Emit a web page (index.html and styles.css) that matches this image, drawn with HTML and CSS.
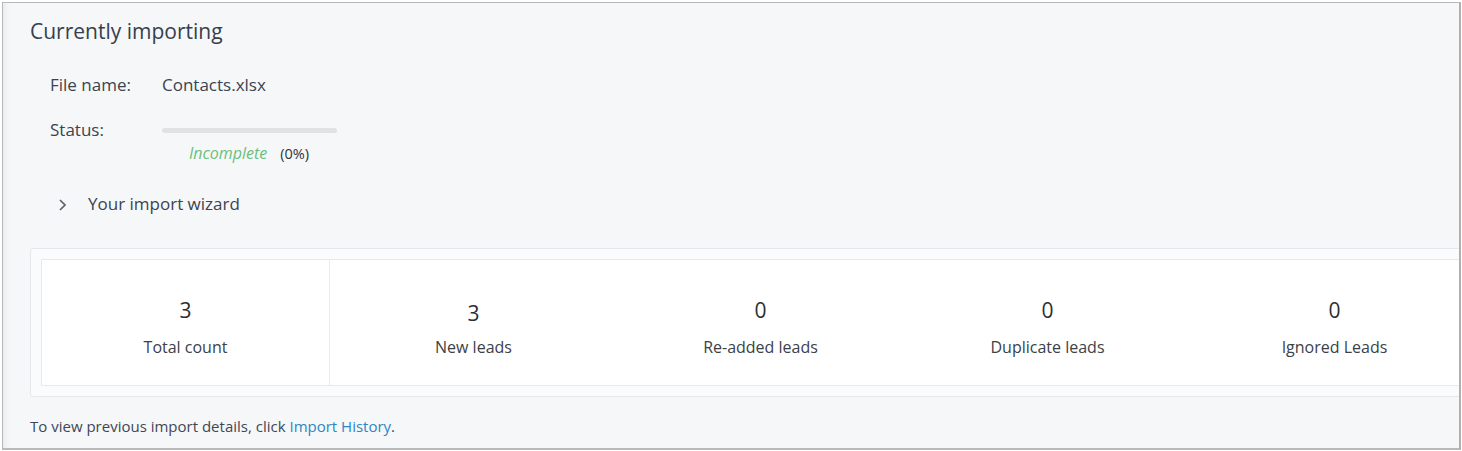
FILE: index.html
```html
<!DOCTYPE html>
<html>
<head>
<meta charset="utf-8">
<link rel="stylesheet" href="styles.css">
</head>
<body>
<div class="frame">
  <h1 class="title">Currently importing</h1>
  <div class="info">
    <div class="row">
      <span class="label">File name:</span>
      <span class="value">Contacts.xlsx</span>
    </div>
    <div class="row status-row">
      <span class="label">Status:</span>
      <div class="status">
        <div class="bar"></div>
        <div class="state"><span class="incomplete">Incomplete</span><span class="pct">(0%)</span></div>
      </div>
    </div>
  </div>
  <div class="wizard">
    <svg class="chev" width="9" height="14" viewBox="0 0 9 14"><path d="M2 2 L7 7 L2 12" fill="none" stroke="#5a6270" stroke-width="1.7"/></svg>
    <span>Your import wizard</span>
  </div>
  <div class="panel">
    <div class="stats">
      <div class="stat first"><div class="num">3</div><div class="lbl">Total count</div></div>
      <div class="stat"><div class="num low">3</div><div class="lbl">New leads</div></div>
      <div class="stat"><div class="num">0</div><div class="lbl">Re-added leads</div></div>
      <div class="stat"><div class="num">0</div><div class="lbl">Duplicate leads</div></div>
      <div class="stat"><div class="num">0</div><div class="lbl">Ignored Leads</div></div>
    </div>
  </div>
  <p class="footer">To view previous import details, click <a href="#">Import History</a>.</p>
</div>
</body>
</html>
```
FILE: styles.css
```css
html, body { margin: 0; padding: 0; background: #ffffff; }
body { font-family: "Open Sans", "Noto Sans", sans-serif; }
.frame {
  margin: 2px 0 0 2px;
  width: 1456px;
  height: 445px;
  border: 1px solid #b9b9b9;
  border-right: 2px solid #b0b0b0;
  border-bottom: 2px solid #b9b9b9;
  background: #f6f7f9;
  box-shadow: inset 6px 0 6px -4px rgba(0,0,0,0.06);
  overflow: hidden;
  box-sizing: content-box;
  padding: 0;
}
.title {
  margin: 0;
  padding: 14px 0 0 27px;
  font-size: 21px;
  font-weight: 400;
  color: #35404e;
  line-height: 28px;
}
.info { padding: 29px 0 0 47px; }
.row { display: flex; align-items: flex-start; color: #3a4450; font-size: 17px; line-height: 22px; }
.label { width: 112px; }
.status-row { margin-top: 23px; }
.status { display: flex; flex-direction: column; }
.bar { width: 175px; height: 5px; border-radius: 3px; background: #e1e2e4; margin-top: 9px; }
.state { margin-top: 10px; padding-left: 27px; font-size: 16px; line-height: 20px; }
.incomplete { color: #6cbf7b; font-style: italic; margin-right: 13px; }
.pct { color: #2f3438; font-size: 14.5px; }
.wizard {
  display: flex; align-items: center;
  padding: 29px 0 0 55px;
  font-size: 17px; color: #3a4450; line-height: 22px;
}
.chev { margin-right: 21px; margin-top: 1px; }
.panel {
  margin: 33px 0 0 27px;
  width: 1450px;
  height: 149px;
  background: #fafbfc;
  border: 1px solid #e5e8eb;
  border-radius: 3px;
  padding: 10px 0 0 10px;
  box-sizing: border-box;
  overflow: hidden;
}
.stats {
  display: flex;
  width: 1437px;
  height: 127px;
  background: #ffffff;
  border: 1px solid #e8e9eb;
  box-sizing: border-box;
}
.stat {
  width: 287px;
  flex: none;
  display: flex; flex-direction: column; align-items: center;
  padding-top: 37px;
  box-sizing: border-box;
}
.stat.first { border-right: 1px solid #ececec; width: 288px; }
.num { font-size: 21px; line-height: 26px; color: #2b2f33; }
.num.low { margin-top: 3px; margin-bottom: -3px; }
.lbl { margin-top: 14px; font-size: 16px; line-height: 20px; color: #3b4148; }
.footer {
  margin: 19px 0 0 27px;
  font-size: 15px; line-height: 20px; color: #3e4852;
}
.footer a { color: #2d86c4; text-decoration: none; }
```
